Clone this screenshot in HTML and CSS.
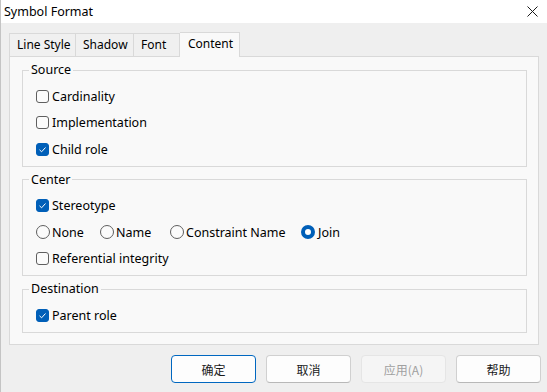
FILE: index.html
```html
<!DOCTYPE html>
<html lang="en">
<head>
  <meta charset="UTF-8">
  <title>Symbol Format</title>
  <link rel="stylesheet" href="styles.css">
</head>
<body>
  <div class="window">
    <div class="titlebar">
      <span class="title">Symbol Format</span>
      <svg class="close" width="11" height="11" viewBox="0 0 11 11">
        <path d="M0.5 0.5 L10.5 10.5 M10.5 0.5 L0.5 10.5" stroke="#1a1a1a" stroke-width="1" fill="none"/>
      </svg>
    </div>

    <div class="content">
      <div class="tabs">
        <div class="tab tab-line">Line Style</div>
        <div class="tab tab-shadow">Shadow</div>
        <div class="tab tab-font">Font</div>
        <div class="tab tab-content active">Content</div>
      </div>

      <div class="panel">
        <fieldset class="group">
          <legend>Source</legend>
          <div class="row"><span class="check"></span>Cardinality</div>
          <div class="row"><span class="check"></span>Implementation</div>
          <div class="row"><span class="check on"></span>Child role</div>
        </fieldset>

        <fieldset class="group">
          <legend>Center</legend>
          <div class="row"><span class="check on"></span>Stereotype</div>
          <div class="row radios">
            <span class="opt opt-none"><span class="radio"></span>None</span>
            <span class="opt opt-name"><span class="radio"></span>Name</span>
            <span class="opt opt-cons"><span class="radio"></span>Constraint Name</span>
            <span class="opt"><span class="radio on"></span>Join</span>
          </div>
          <div class="row"><span class="check"></span>Referential integrity</div>
        </fieldset>

        <fieldset class="group">
          <legend>Destination</legend>
          <div class="row"><span class="check on"></span>Parent role</div>
        </fieldset>
      </div>

      <div class="buttons">
        <button class="btn default">确定</button>
        <button class="btn">取消</button>
        <button class="btn disabled">应用(A)</button>
        <button class="btn">帮助</button>
      </div>
    </div>
  </div>
</body>
</html>
```

FILE: styles.css
```css
* {
  box-sizing: border-box;
  margin: 0;
  padding: 0;
}

body {
  width: 547px;
  height: 392px;
  overflow: hidden;
  font-family: 'Noto Sans', 'Noto Sans CJK SC', sans-serif;
  font-size: 12.5px;
  color: #1a1a1a;
  background: #efefef;
}

.window {
  height: 392px;
  display: flex;
  flex-direction: column;
  border-left: 1px solid #c4c4c4;
}

.titlebar {
  height: 23px;
  background: #ffffff;
  display: flex;
  align-items: center;
  justify-content: space-between;
  padding: 0 9px 0 3px;
}

.title {
  font-size: 12.5px;
  color: #000;
}

.close {
  margin-top: -1px;
}

.content {
  flex: 1;
  background: #efefef;
  padding: 9px 8px 0 8px;
}

.tabs {
  display: flex;
  align-items: flex-end;
  height: 24px;
}

.tab {
  height: 23px;
  line-height: 22px;
  padding-left: 7px;
  background: #f0f0f0;
  border: 1px solid #d9d9d9;
  border-bottom: none;
  border-right: none;
  color: #000;
  font-size: 12px;
}

.tab-line { width: 66px; }
.tab-shadow { width: 58px; }
.tab-font { width: 47px; border-right: 1px solid #d9d9d9; }

.tab.active {
  width: 60px;
  height: 25px;
  line-height: 21px;
  background: #f9f9f9;
  padding-left: 8px;
  border-right: 1px solid #d9d9d9;
  border-left: none;
  margin-bottom: -1px;
  position: relative;
  z-index: 1;
}

.panel {
  width: 530px;
  height: 289px;
  background: #f9f9f9;
  border: 1px solid #d9d9d9;
  padding: 6px 11px 0 12px;
}

.group {
  border: 1px solid #d9d9d9;
  padding: 0 0 3px 0;
  margin: 0 0 6px 0;
  min-width: 0;
}

.group legend {
  margin-left: 6px;
  padding: 0 2px;
  font-size: 12.5px;
  line-height: 14px;
  color: #000;
}

.group legend + .row {
  margin-top: 6px;
}

.row {
  height: 26.5px;
  display: flex;
  align-items: center;
  padding-left: 13px;
  color: #000;
}

.check {
  width: 13px;
  height: 13px;
  border: 1px solid #5f5f5f;
  border-radius: 3px;
  background: #fbfbfb;
  margin-right: 3px;
  flex-shrink: 0;
}

.check.on {
  border-color: #005fb8;
  background: #005fb8 url("data:image/svg+xml;utf8,<svg xmlns='http://www.w3.org/2000/svg' width='11' height='11'><path d='M2.5 5.8 L4.6 7.8 L8.5 3.5' stroke='white' stroke-width='1' fill='none'/></svg>") no-repeat center;
}

.opt {
  display: flex;
  align-items: center;
}

.opt-none { width: 64px; }
.opt-name { width: 70px; }
.opt-cons { width: 131px; }

.radio {
  width: 14px;
  height: 14px;
  border: 1px solid #5f5f5f;
  border-radius: 50%;
  background: #fbfbfb;
  margin-right: 2px;
  flex-shrink: 0;
}

.radio.on {
  border: 4px solid #005fb8;
  background: #ffffff;
  margin-right: 3px;
}

.buttons {
  display: flex;
  justify-content: flex-end;
  gap: 10px;
  padding: 10px 0 0 0;
  margin-right: -2px;
}

.btn {
  width: 85px;
  height: 28px;
  font-family: 'Noto Sans CJK SC', 'Noto Sans', sans-serif;
  font-size: 12px;
  color: #1a1a1a;
  background: #fdfdfd;
  border: 1px solid #d0d0d0;
  border-bottom-color: #b8b8b8;
  border-radius: 4px;
}

.btn.default {
  border: 1px solid #0067c0;
}

.btn.disabled {
  background: #f5f5f5;
  border-color: #e5e5e5;
  color: #a0a0a0;
}
```
